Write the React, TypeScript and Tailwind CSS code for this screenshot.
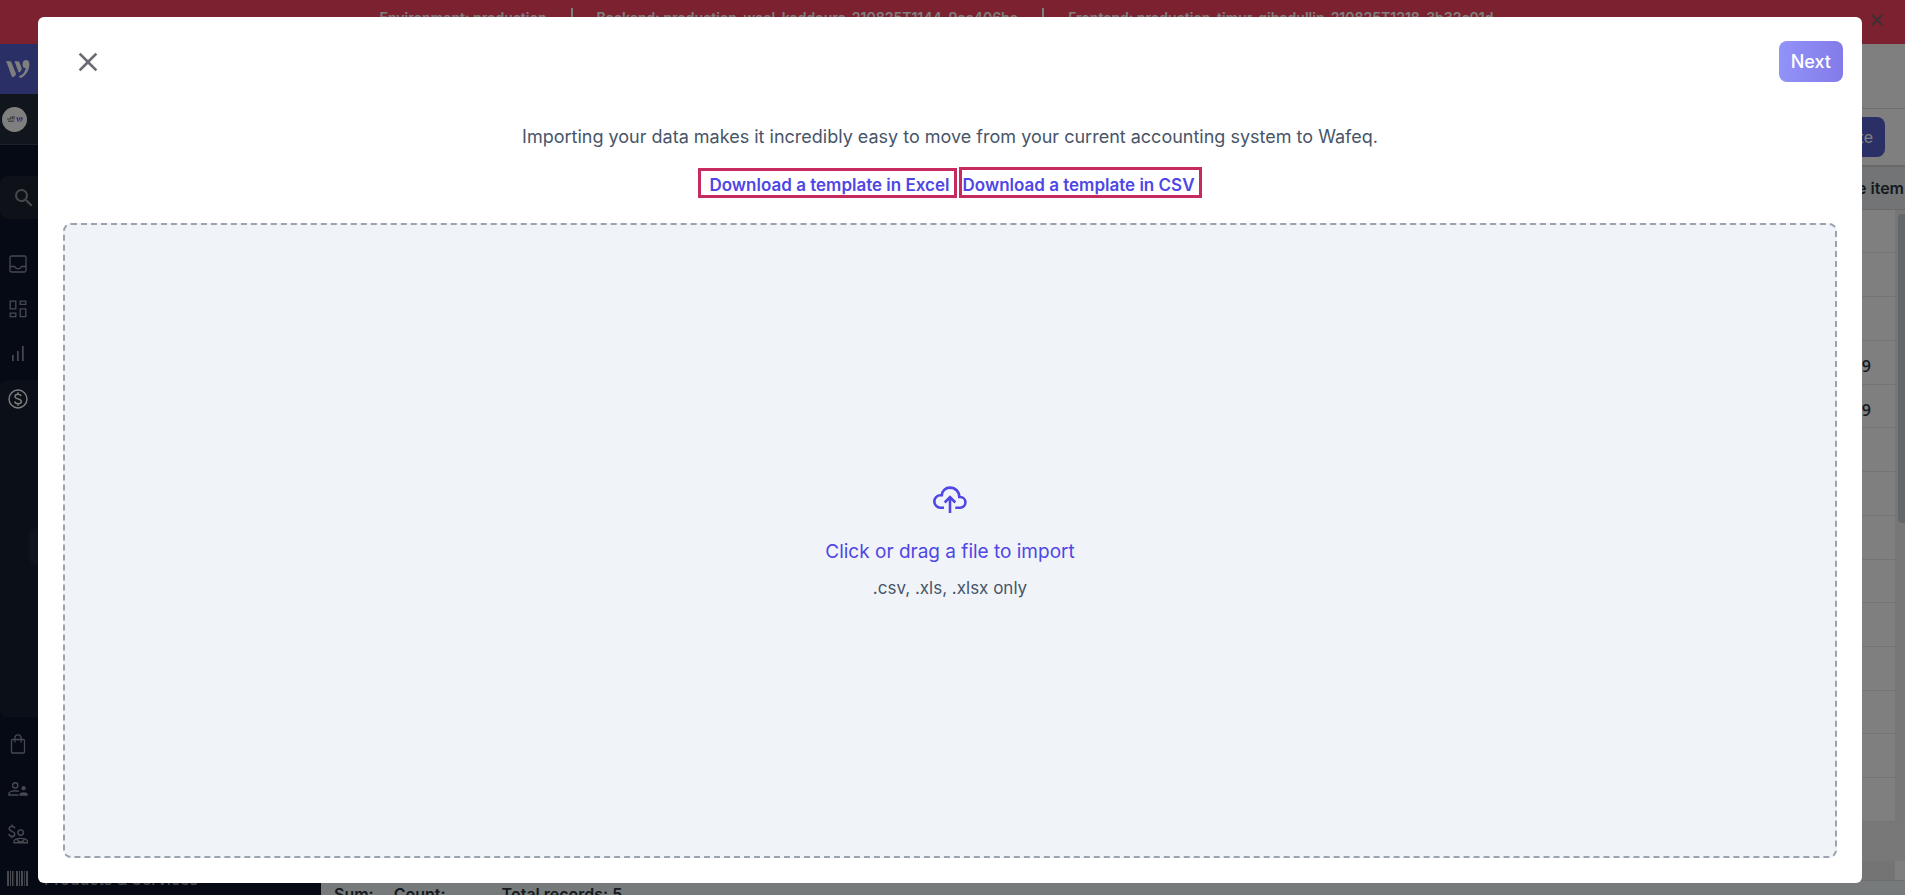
import React from 'react';
import { MdClose, MdKeyboardArrowDown, MdSearch } from 'react-icons/md';

type IconProps = { className?: string };

const LogoIcon: React.FC<IconProps> = ({ className }) => (
    <svg viewBox="0 0 24 18" className={className} fill="currentColor" aria-hidden="true">
        <path d="M0 1.2h3.600c1 0 1.500.4 1.900 1.300l4.600 11.600c-.8 1.900-2 2.700-3.700 3.200C5.300 15.600 3.600 10.500 2.100 6.300 1.500 4.500.9 2.800 0 1.200z" />
        <path d="M8.300 1.200h3.300c1 0 1.500.4 1.900 1.300l2.300 6.200c-.6 2-1.500 3.200-3 3.700-1.200-2.200-2.800-8-4.500-11.200z" />
        <path d="M16.600 3.700C16.800 1.300 18.200 0 20 0c2 0 3.400 1.500 3.400 4.100 0 4.500-2.600 11.200-8.300 13.900-1 0-1.800-.6-2.400-1.700 3.800-1.300 6.500-4.500 7.100-8.400-1.900.5-3.500-.8-3.200-4.200z" />
    </svg>
);

const InboxIcon: React.FC<IconProps> = ({ className }) => (
    <svg viewBox="0 0 18 18" className={className} fill="none" stroke="currentColor" strokeWidth="1.3" aria-hidden="true">
        <rect x="1" y="1" width="16" height="16" rx="1.5" />
        <path d="M1 11.500h4.700c.6 1.500 1.700 2.300 3.300 2.300s2.700-.8 3.300-2.300H17" />
    </svg>
);

const DashboardIcon: React.FC<IconProps> = ({ className }) => (
    <svg viewBox="0 0 18 18" className={className} fill="none" stroke="currentColor" strokeWidth="1.300" aria-hidden="true">
        <path d="M1.200 1.200h5.600v7.600H1.200zM11.200 1.200h5.600v3.200h-5.600zM1.200 13.200h5.600v3.400H1.200zM11.200 8.800h5.600v7.800h-5.600z" />
    </svg>
);

const ReportsIcon: React.FC<IconProps> = ({ className }) => (
    <svg viewBox="0 0 12 15" className={className} fill="currentColor" aria-hidden="true">
        <path d="M0 9h1.700v6H0zM5 5h1.700v10H5zM10 0h1.700v15H10z" />
    </svg>
);

const DollarIcon: React.FC<IconProps> = ({ className }) => (
    <svg viewBox="0 0 20 20" className={className} fill="none" stroke="currentColor" strokeWidth="1.4" aria-hidden="true">
        <circle cx="10" cy="10" r="9" />
        <path d="M13 7.200C12.700 5.800 11.500 5.200 10 5.200c-1.700 0-3 .8-3 2.200 0 3.200 6.300 1.700 6.300 5.100 0 1.500-1.500 2.300-3.200 2.300-1.900 0-3.200-.8-3.400-2.400M10 3.300v1.900M10 14.800v1.900" />
    </svg>
);

const BagIcon: React.FC<IconProps> = ({ className }) => (
    <svg viewBox="0 0 16 20" className={className} fill="none" stroke="currentColor" strokeWidth="1.300" aria-hidden="true">
        <rect x="1.500" y="5.500" width="13" height="13.500" rx="1" />
        <path d="M4.900 8.500V4a3.100 3.100 0 0 1 6.200 0v4.500" />
    </svg>
);

const ContactsIcon: React.FC<IconProps> = ({ className }) => (
    <svg viewBox="0 0 20 14" className={className} fill="none" stroke="currentColor" strokeWidth="1.400" aria-hidden="true">
        <circle cx="7.200" cy="3.400" r="2.600" />
        <path d="M10.500 13H.9v-1.400c0-1.700 3.300-2.800 6.300-2.800 1.200 0 2.600.2 3.700.6" />
        <circle cx="15.600" cy="6.200" r="2.100" fill="currentColor" stroke="none" />
        <path d="M11.400 13.700v-1.200c0-1.400 2-2.300 4.200-2.300s4.200.9 4.200 2.300v1.200z" fill="currentColor" stroke="none" />
    </svg>
);

const PayeeIcon: React.FC<IconProps> = ({ className }) => (
    <svg viewBox="0 0 20 20" className={className} fill="none" stroke="currentColor" strokeWidth="1.400" aria-hidden="true">
        <path d="M6.700 4.500C6.500 3 5.400 2.300 4 2.300S1.200 3.100 1.200 4.600c0 3.400 5.600 2 5.600 5.300 0 1.600-1.200 2.500-2.900 2.500-1.600 0-2.800-.8-3-2.500M4 .5v1.800M4 12.400v1.800" />
        <circle cx="12.700" cy="8.600" r="2.700" />
        <path d="M6 18.800v-1.200c0-2 3.200-3.200 6.700-3.200s6.700 1.200 6.700 3.200v1.200zM9.500 15.500c0 1.600.8 2.300 3.200 2.300s3.200-.7 3.200-2.300" />
    </svg>
);

const BarcodeIcon: React.FC<IconProps> = ({ className }) => (
    <svg viewBox="0 0 21 15" className={className} fill="currentColor" aria-hidden="true">
        <path d="M0 0h2v15H0zM3 0h1v15H3zM5 0h1v15H5zM6.500 0h.6v15h-.6zM9 0h2v15H9zM12 0h1v15h-1zM14 0h2v15h-2zM17 0h.7v15H17zM19 0h2v15h-2z" />
    </svg>
);

const CloudUploadIcon: React.FC<IconProps> = ({ className }) => (
    <svg viewBox="0 0 34 28" className={className} fill="none" stroke="currentColor" strokeWidth="2.600" aria-hidden="true">
        <path d="M11 21.700H7.500a6.200 6.200 0 0 1 0-12.400h1.300C9.300 4.600 12.500 1.600 17 1.600c5.300 0 9.300 4 9.300 9.400h.8a5.350 5.350 0 0 1 0 10.700h-4.800" />
        <path d="M17 27V11.500M11.700 16.500 17 11.200l5.300 5.300" />
    </svg>
);

const builds = [
    'Environment: production',
    'Backend: production-wael-kaddoura-210825T1144-9ac406be',
    'Frontend: production-timur-gibadullin-210825T1218-3b32c01d',
];

const rows = ['', '', '', '9', '9', '', '', '', '', '', '', '', '', ''];

const Banner: React.FC = () => (
    <div className="flex h-11 shrink-0 items-start bg-[#f64260] text-white">
        <div className="flex h-9 grow items-center justify-center gap-6 pl-6 text-sm font-semibold">
            {builds.map((build, i) => (
                <React.Fragment key={build}>
                    {i > 0 && <span className="h-5 w-0.5 bg-white" />}
                    <span>{build}</span>
                </React.Fragment>
            ))}
        </div>
        <button aria-label="Dismiss" className="flex h-10 w-14 items-center justify-center text-[#666666]">
            <MdClose className="size-5" />
        </button>
    </div>
);

const NavButton: React.FC<{ label: string; children: React.ReactNode }> = ({ label, children }) => (
    <button aria-label={label} className="flex h-[45px] w-full shrink-0 items-center pl-2">
        <span className="flex w-5 justify-center">{children}</span>
    </button>
);

const Sidebar: React.FC = () => (
    <nav className="flex w-[321px] shrink-0 flex-col overflow-hidden bg-[#0a1428] text-[#8f939e]">
        <div className="flex h-[50px] shrink-0 items-center bg-[#5460cc] pl-1.5 text-white">
            <LogoIcon className="h-[18px] w-6" />
        </div>
        <div className="flex h-[51px] shrink-0 items-center border-b border-[#3c424c] bg-[#222c3a] pl-0.5">
            <span className="flex size-[25px] items-center justify-center gap-px rounded-full bg-white">
                <svg viewBox="0 0 9 7" className="h-[6px] w-2 text-[#444444]" fill="none" stroke="currentColor" aria-hidden="true">
                    <path d="M0 3.500h3M4 1v3M6 0v4M8 0v4M1 6h7" />
                </svg>
                <LogoIcon className="h-[5px] w-[7px] text-[#4f60e5]" />
            </span>
        </div>
        <button aria-label="Search" className="mt-[31px] flex h-[43px] shrink-0 items-center rounded-lg bg-[#1d2430] pl-3">
            <MdSearch className="size-6" />
        </button>
        <div className="h-[22px] shrink-0" />
        <NavButton label="Inbox"><InboxIcon className="size-[18px]" /></NavButton>
        <NavButton label="Dashboard"><DashboardIcon className="size-[18px]" /></NavButton>
        <NavButton label="Reports"><ReportsIcon className="h-[15px] w-3" /></NavButton>
        <div className="mt-1 flex grow flex-col rounded-lg bg-[#172030] text-white">
            <div className="-mt-1"><NavButton label="Accounting"><DollarIcon className="size-5" /></NavButton></div>
            <div className="mt-[107px] ml-[29px] h-[37px] rounded-lg bg-[#202a3a]" />
        </div>
        <div className="h-1 shrink-0" />
        <NavButton label="Purchases"><BagIcon className="h-5 w-4" /></NavButton>
        <NavButton label="Contacts"><ContactsIcon className="h-[14px] w-5" /></NavButton>
        <NavButton label="Payroll"><PayeeIcon className="size-5" /></NavButton>
        <button className="-mb-1.5 flex h-[45px] shrink-0 items-center pl-[7px] text-base font-medium">
            <BarcodeIcon className="h-[15px] w-[21px]" />
            <span className="ml-4 grow text-left">Products &amp; Services</span>
            <MdKeyboardArrowDown className="mr-8 size-5" />
        </button>
    </nav>
);

const Ledger: React.FC = () => (
    <main className="flex min-w-0 grow flex-col bg-white text-[#2b3442]">
        <div className="h-[65px] shrink-0 border-b border-[#dcdcdc]" />
        <div className="flex h-[58px] shrink-0 items-center justify-end border-b-2 border-[#d0d3d6] pr-5">
            <button className="h-10 rounded-lg bg-[#5460cc] px-3 text-base text-white">Create</button>
        </div>
        <div className="flex h-[43px] shrink-0 items-center justify-end border-b border-[#cfd2d4] bg-[#e4e8ea] pr-px text-base font-semibold">
            Line item
        </div>
        <div className="flex min-h-0 grow">
            <table className="h-full grow border-collapse text-right font-['Open_Sans',sans-serif] text-base font-semibold">
                <tbody>
                    {rows.map((value, i) => (
                        <tr key={i} className="border-b border-[#e8e8e8]">
                            <td className="pt-2 pr-6 leading-5">{value || '\u00a0'}</td>
                        </tr>
                    ))}
                </tbody>
            </table>
            <div className="w-2.5 shrink-0 bg-[#efefef] pt-1 pl-[3px]">
                <div className="h-[309px] rounded-l bg-[#c7cdd6]" />
            </div>
        </div>
        <div className="h-[39px] shrink-0 bg-[#f0f0f2]" />
        <div className="h-5 shrink-0 border-b border-[#dddddd] bg-[#e8e8ea] pl-[1574px]">
            <div className="h-full bg-white" />
        </div>
        <div className="flex h-[14px] shrink-0 items-start gap-5 bg-[#eff4f4] px-[13px] pt-[3px] text-base leading-5 font-semibold">
            <span>Sum:</span>
            <span>Count:</span>
            <span className="ml-9">Total records: 5</span>
        </div>
    </main>
);

const ImportModal: React.FC = () => (
    <div className="absolute inset-0 bg-black/50 pt-[17px] pr-[43px] pb-3 pl-[38px]">
        <div role="dialog" aria-label="Import" className="flex h-full flex-col rounded-md bg-white">
            <header className="flex items-center justify-between pt-6 pr-[19px] pl-[34px]">
                <button aria-label="Close" className="text-[#6b6b73]">
                    <MdClose className="size-8" />
                </button>
                <button className="h-[41px] rounded-lg bg-linear-to-r from-[#9193f7] to-[#847be9] px-3 text-lg font-medium text-white">
                    Next
                </button>
            </header>
            <p className="mt-[41px] text-center text-lg text-[#475569]">
                Importing your data makes it incredibly easy to move from your current accounting system to Wafeq.
            </p>
            <div className="mt-4 flex items-end justify-center gap-0.5 text-[17px] leading-6 font-semibold text-[#4f46e5]">
                <a href="#excel" className="h-[30px] border-3 border-[#c62a5e] pt-0.5 pr-1 pl-2">Download a template in Excel</a>
                <a href="#csv" className="h-[31px] border-3 border-[#c62a5e] pt-[3px] pr-1 pl-px">Download a template in CSV</a>
            </div>
            <label className="mx-[25px] my-[25px] flex grow cursor-pointer flex-col items-center justify-center rounded-lg border-2 border-dashed border-[#9ca3af] bg-[#f0f4f9] pt-1.5">
                <input type="file" accept=".csv,.xls,.xlsx" className="sr-only" />
                <CloudUploadIcon className="h-7 w-[34px] text-[#4f46e5]" />
                <span className="mt-6 text-[19px] leading-7 text-[#4f46e5]">Click or drag a file to import</span>
                <span className="mt-2 text-[17px] leading-7 text-[#475569]">.csv, .xls, .xlsx only</span>
            </label>
        </div>
    </div>
);

const App: React.FC = () => (
    <div className="relative flex h-screen flex-col overflow-hidden font-['Inter',sans-serif]">
        <Banner />
        <div className="flex min-h-0 grow">
            <Sidebar />
            <Ledger />
        </div>
        <ImportModal />
    </div>
);

export default App;
